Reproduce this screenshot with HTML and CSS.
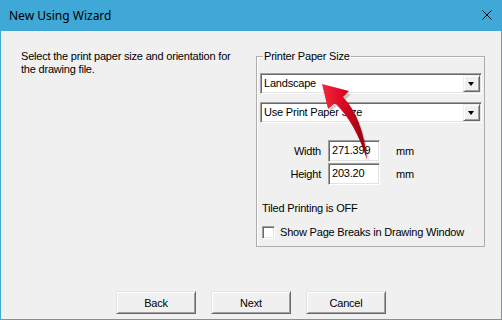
FILE: index.html
```html
<!DOCTYPE html>
<html lang="en">
<head>
    <meta charset="UTF-8">
    <title>New Using Wizard</title>
    <link rel="stylesheet" href="styles.css">
</head>
<body>
    <div class="window">
        <div class="titlebar">
            <span class="title">New Using Wizard</span>
            <svg class="close" width="10" height="10" viewBox="0 0 10 10">
                <path d="M0.5 0.5 L9.5 9.5 M9.5 0.5 L0.5 9.5" stroke="#000" stroke-width="1" fill="none"/>
            </svg>
        </div>

        <div class="content">
            <p class="intro">Select the print paper size and orientation for<br>the drawing file.</p>

            <fieldset class="paper">
                <legend>Printer Paper Size</legend>
                <div class="combo first"><span class="value">Landscape</span><span class="drop"></span></div>
                <div class="combo"><span class="value">Use Print Paper Size</span><span class="drop"></span></div>

                <div class="dims">
                    <span class="label">Width</span>
                    <div class="field">271.399</div>
                    <span class="unit">mm</span>
                    <span class="label">Height</span>
                    <div class="field">203.20</div>
                    <span class="unit">mm</span>
                </div>

                <p class="tiled">Tiled Printing is OFF</p>
                <div class="check"><span class="box"></span>Show Page Breaks in Drawing Window</div>
            </fieldset>
        </div>

        <div class="buttons">
            <button>Back</button>
            <button>Next</button>
            <button>Cancel</button>
        </div>

        <!-- red pointer drawn over the dialog -->
        <svg class="arrow" width="60" height="85" viewBox="315 80 60 85">
            <defs>
                <linearGradient id="red" x1="0" y1="0" x2="1" y2="0">
                    <stop offset="0" stop-color="#f4283e"/>
                    <stop offset="0.5" stop-color="#d9061f"/>
                    <stop offset="1" stop-color="#8e0010"/>
                </linearGradient>
            </defs>
            <path d="M322 86 L349 93 L343 99 Q363 120 367 161 Q355 124 335 105 L328 111 Z" fill="rgba(0,0,0,0.18)" transform="translate(1 1)"/>
            <path d="M321 84 L348 91 L342 97 Q362 118 366 160 Q354 122 334 103 L327 109 Z" fill="url(#red)"/>
        </svg>
    </div>
</body>
</html>
```

FILE: styles.css
```css
body {
    margin: 0;
    background: #f0f0f0;
    font-family: 'Liberation Sans', Arial, sans-serif;
    font-size: 11px;
    letter-spacing: -0.2px;
    color: #000;
}

.window {
    position: relative;
    width: 502px;
    height: 320px;
    box-sizing: border-box;
    display: flex;
    flex-direction: column;
    background: #f0f0f0;
    border: 1px solid #3fa8d6;
    border-top: none;
}

.titlebar {
    height: 31px;
    flex: none;
    display: flex;
    align-items: center;
    justify-content: space-between;
    padding: 0 9px 0 8px;
    background: #3fa8d6; /* accent blue */
}

.title {
    font-family: 'Noto Sans', 'Liberation Sans', sans-serif;
    font-size: 12px;
    letter-spacing: 0;
    line-height: 16px;
    margin-top: 1px;
}

.close {
    display: block;
    margin-top: -1px;
}

.content {
    display: flex;
    padding: 19px 0 0 20px;
}

.intro {
    width: 235px;
    margin: 0;
    line-height: 13px;
}

.paper {
    width: 229px;
    box-sizing: border-box;
    margin: 0;
    padding: 0 2px 7px 3px;
    border: 1px solid #adadad;
    box-shadow: inset 1px 1px #fff;
}

.paper legend {
    margin-left: 3px;
    padding: 0 1px;
    line-height: 13px;
}

.combo {
    position: relative;
    width: 222px;
    height: 21px;
    box-sizing: border-box;
    margin-top: 8px;
    background: #fff;
    border: 1px solid;
    border-color: #a0a0a0 #fff #fff #a0a0a0;
    box-shadow: inset 1px 1px #696969, inset -1px -1px #e3e3e3;
    display: flex;
    align-items: center;
    padding-left: 3px;
}

.combo.first {
    margin-top: 10px;
}

.combo .value {
    line-height: 13px;
}

.combo .drop {
    position: absolute;
    top: 1px;
    right: 1px;
    width: 17px;
    height: 17px;
    box-sizing: border-box;
    background: #f0f0f0;
    border: 1px solid;
    border-color: #f0f0f0 #696969 #696969 #f0f0f0;
    box-shadow: inset 1px 1px #fff, inset -1px -1px #a0a0a0;
}

.combo .drop::after {
    content: '';
    position: absolute;
    left: 4px;
    top: 6px;
    border-left: 3.5px solid transparent;
    border-right: 3.5px solid transparent;
    border-top: 4px solid #000;
}

.dims {
    display: grid;
    grid-template-columns: 61px 59px auto;
    row-gap: 1px;
    align-items: center;
    margin-top: 17px;
}

.dims .label {
    text-align: right;
}

.field {
    height: 22px;
    box-sizing: border-box;
    margin-left: 7px;
    padding: 3px 0 0 3px;
    line-height: 13px;
    background: #fff;
    border: 1px solid;
    border-color: #a0a0a0 #fff #fff #a0a0a0;
    box-shadow: inset 1px 1px #696969, inset -1px -1px #e3e3e3;
}

.unit {
    margin-left: 16px;
}

.tiled {
    margin: 17px 0 0 2px;
    line-height: 13px;
}

.check {
    display: flex;
    align-items: center;
    gap: 5px;
    margin: 11px 0 0 2px;
    line-height: 13px;
}

.check .box {
    width: 13px;
    height: 13px;
    box-sizing: border-box;
    background: #fff;
    border: 1px solid;
    border-color: #a0a0a0 #fff #fff #a0a0a0;
    box-shadow: inset 1px 1px #696969, inset -1px -1px #e3e3e3;
}

.buttons {
    margin-top: auto;
    display: flex;
    justify-content: center;
    gap: 15px;
    padding-bottom: 5px;
}

.buttons button {
    width: 80px;
    height: 23px;
    padding: 0;
    font-family: 'Liberation Sans', Arial, sans-serif;
    font-size: 11px;
    letter-spacing: -0.2px;
    color: #000;
    background: #f0f0f0;
    border: 1px solid;
    border-color: #e3e3e3 #696969 #696969 #e3e3e3;
    box-shadow: inset 1px 1px #fff, inset -1px -1px #a0a0a0;
}

.arrow {
    position: absolute;
    left: 315px;
    top: 80px;
    pointer-events: none;
}
```
